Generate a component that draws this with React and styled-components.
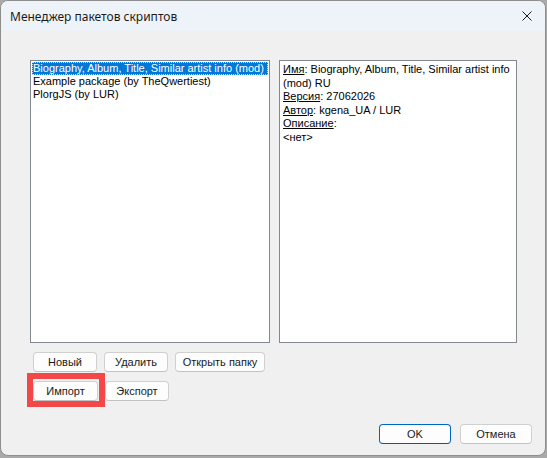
import React from 'react';
import styled, { createGlobalStyle } from 'styled-components';

const GlobalStyle = createGlobalStyle`
  html, body {
    margin: 0;
    padding: 0;
    background: #a9a9a9;
  }
  body {
    font-family: 'Liberation Sans', Arial, sans-serif;
  }
`;

const Window = styled.div`
  box-sizing: border-box;
  width: 546px;
  height: 456px;
  background: #f0f0f0;
  border: 1px solid #8e8e8e;
  border-radius: 8px;
  overflow: hidden;
  display: flex;
  flex-direction: column;
`;

const TitleBar = styled.div`
  height: 30px;
  background: #eef3f9;
  display: flex;
  align-items: center;
  justify-content: space-between;
  padding: 0 10px 0 9px;
  font-family: 'Noto Sans', sans-serif;
  font-size: 12px;
  color: #1a1a1a;
`;

const CloseButton = styled.div`
  width: 10px;
  height: 10px;
  margin-right: 3px;
  display: flex;
`;

const Body = styled.div`
  flex: 1;
  display: flex;
  flex-direction: column;
  padding: 29px 13px 10px 29px;
`;

const Panels = styled.div`
  display: flex;
  gap: 9px;
  height: 283px;
`;

const Box = styled.div`
  box-sizing: border-box;
  width: ${(p) => p.width}px;
  height: 100%;
  background: #fff;
  border: 1px solid #828790;
  padding: 1px 1px;
  font-family: 'Liberation Sans', Arial, sans-serif;
  font-size: 11px;
  line-height: 13px;
  color: #000;
  overflow: hidden;
`;

const Item = styled.div`
  white-space: nowrap;
  overflow: hidden;
  padding-left: 1px;
  height: 13px;
  background: ${(p) => (p.selected ? '#0078d7' : 'transparent')};
  color: ${(p) => (p.selected ? '#fff' : '#000')};
  outline: ${(p) => (p.selected ? '1px dotted #c8e0f5' : 'none')};
  outline-offset: -1px;
`;

const InfoText = styled.div`
  padding: 1px 2px 0 2px;
  line-height: 13.5px;
`;

const Label = styled.span`
  text-decoration: underline;
`;

const ButtonRow = styled.div`
  display: flex;
  gap: ${(p) => p.gap || 7}px;
  margin-top: ${(p) => p.top}px;
  padding-left: ${(p) => p.left || 0}px;
  justify-content: ${(p) => (p.right ? 'flex-end' : 'flex-start')};
`;

const Button = styled.button`
  box-sizing: border-box;
  height: 20px;
  width: ${(p) => p.width}px;
  padding: 0;
  background: #fdfdfd;
  border: 1px solid ${(p) => (p.primary ? '#0067c0' : '#d0d0d0')};
  border-bottom-color: ${(p) => (p.primary ? '#0059a8' : '#c2c2c2')};
  border-radius: 4px;
  font-family: 'Liberation Sans', Arial, sans-serif;
  font-size: 11px;
  color: #1a1a1a;
`;

/* red frame drawn around a button; negative margin keeps the row spacing */
const Highlight = styled.div`
  display: flex;
  margin: -8px -7px -6px -6px;
  padding: 2px 1px 0 0;
  border: 6px solid #f24848;
`;

export default function App() {
  return (
    <>
      <GlobalStyle />
      <Window>
        <TitleBar>
          <span>Менеджер пакетов скриптов</span>
          <CloseButton>
            <svg width="10" height="10" viewBox="0 0 10 10">
              <path d="M0.5 0.5L9.5 9.5M9.5 0.5L0.5 9.5" stroke="#1a1a1a" strokeWidth="1" fill="none" />
            </svg>
          </CloseButton>
        </TitleBar>
        <Body>
          <Panels>
            <Box width={240}>
              <Item selected>Biography, Album, Title, Similar artist info (mod) RU</Item>
              <Item>Example package (by TheQwertiest)</Item>
              <Item>PlorgJS (by LUR)</Item>
            </Box>
            <Box width={238}>
              <InfoText>
                <Label>Имя</Label>: Biography, Album, Title, Similar artist info (mod) RU
                <br />
                <Label>Версия</Label>: 27062026
                <br />
                <Label>Автор</Label>: kgena_UA / LUR
                <br />
                <Label>Описание</Label>:
                <br />
                &lt;нет&gt;
              </InfoText>
            </Box>
          </Panels>
          <ButtonRow top={9} left={3}>
            <Button width={64}>Новый</Button>
            <Button width={64}>Удалить</Button>
            <Button width={90}>Открыть папку</Button>
          </ButtonRow>
          <ButtonRow top={9} left={3}>
            <Highlight>
              <Button width={65}>Импорт</Button>
            </Highlight>
            <Button width={64}>Экспорт</Button>
          </ButtonRow>
          <ButtonRow top={23} right gap={9}>
            <Button width={72} primary>OK</Button>
            <Button width={72}>Отмена</Button>
          </ButtonRow>
        </Body>
      </Window>
    </>
  );
}
